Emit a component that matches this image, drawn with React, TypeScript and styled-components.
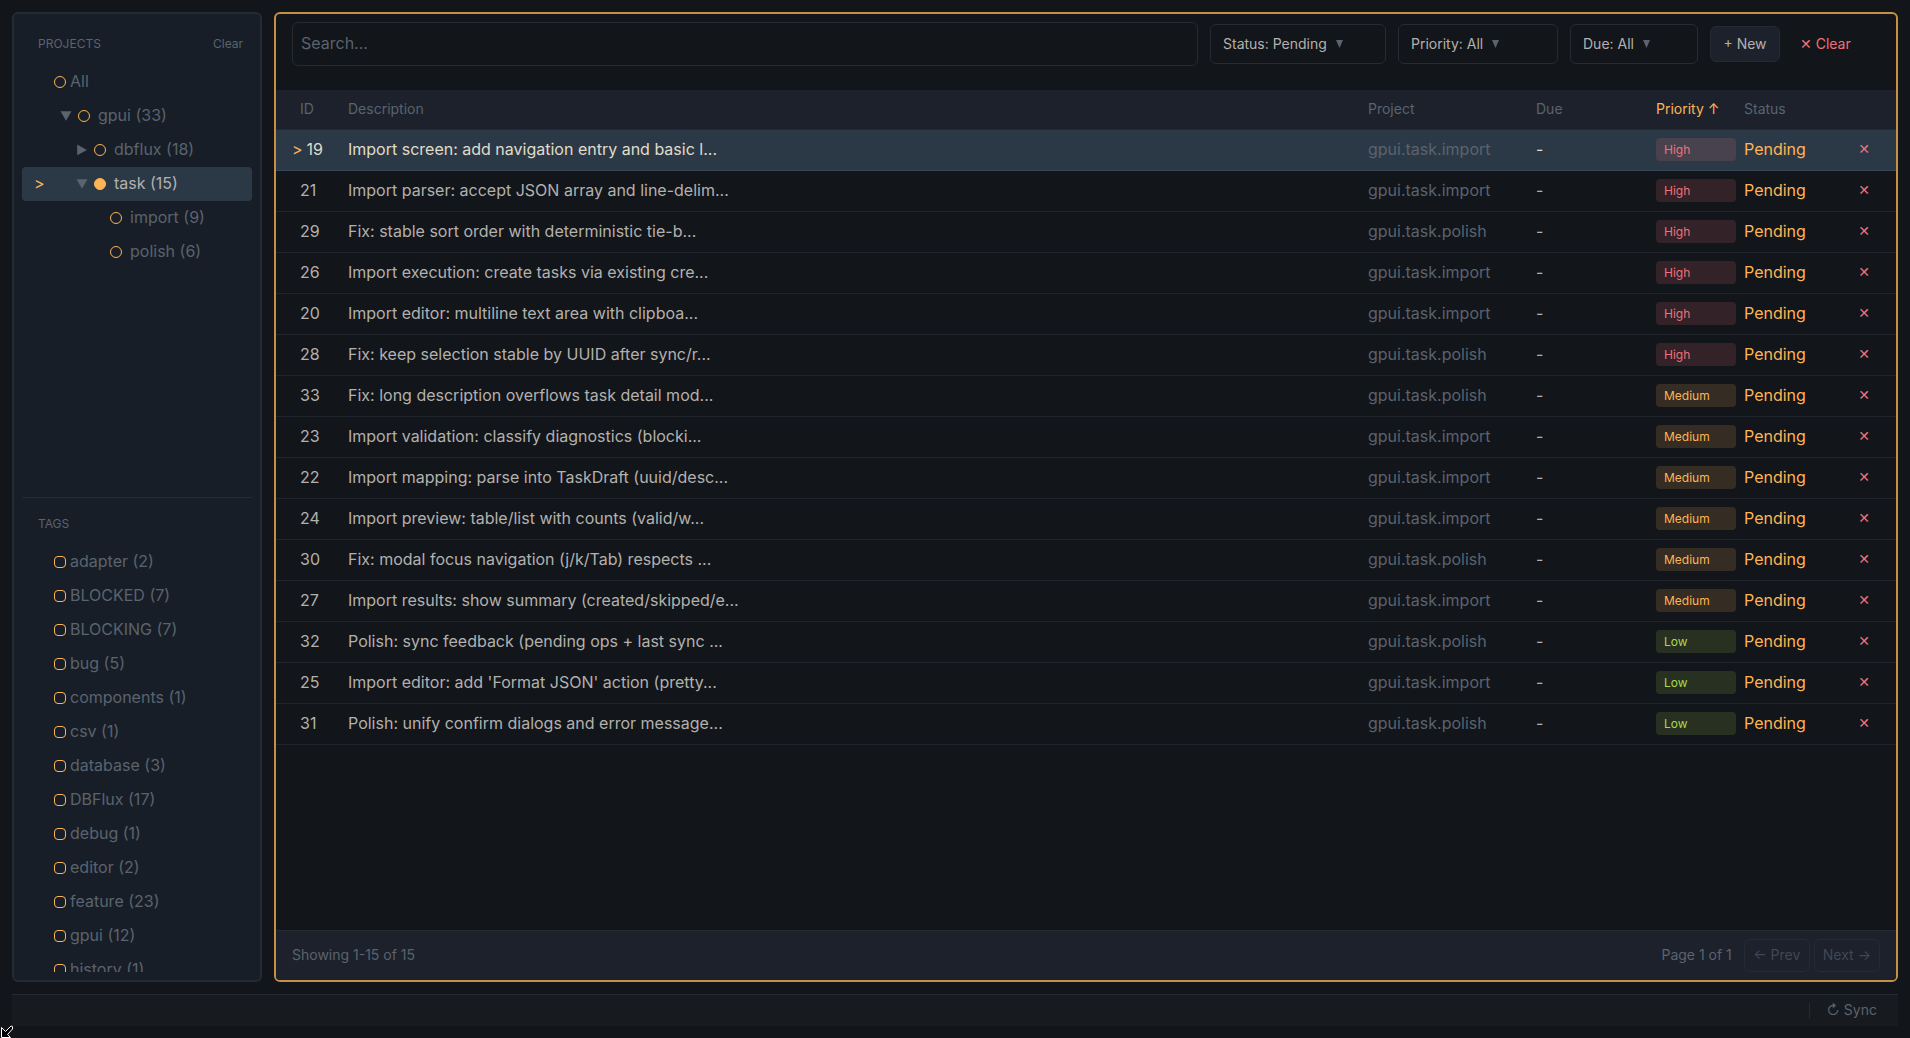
import React, { useState } from "react";
import styled, { createGlobalStyle } from "styled-components";

const c = {
  bg: "#12151a",
  panel: "#181e27",
  header: "#1c212c",
  bar: "#171b1f",
  border: "#252a33",
  line: "#20252b",
  select: "#2b3947",
  muted: "#5a636e",
  text: "#b3b1ad",
  bright: "#e0dcca",
  accent: "#ffb454",
  focus: "#c68f46",
  red: "#f07178",
  green: "#aad94c",
};

const Global = createGlobalStyle`
  *, *::before, *::after { box-sizing: border-box; }
  body {
    margin: 0;
    background: ${c.bg};
    color: ${c.text};
    font: 16px/26px Inter, "Noto Sans", "DejaVu Sans", sans-serif;
  }
  button, input, select { font: inherit; color: inherit; }
`;

const Shell = styled.div`
  height: 100vh;
  padding: 12px;
  display: flex;
  flex-direction: column;
  gap: 12px;
  overflow: hidden;
`;

const Body = styled.div`
  flex: 1;
  min-height: 0;
  display: flex;
  gap: 12px;
`;

const Sidebar = styled.aside`
  width: 250px;
  flex: none;
  display: grid;
  grid-template-rows: minmax(0, 1fr) minmax(0, 1fr);
  padding: 8px;
  background: ${c.panel};
  border: 2px solid ${c.border};
  border-radius: 6px;
`;

const Section = styled.section<{ $divided?: boolean }>`
  min-height: 0;
  overflow: hidden;
  ${(p) => p.$divided && `border-top: 1px solid ${c.border}; padding-top: 4px;`}
`;

const SectionHead = styled.header`
  display: flex;
  justify-content: space-between;
  padding: 12px 9px 12px 16px;
  font-size: 12px;
  line-height: 19px;
  color: ${c.muted};
`;

const SectionTitle = styled.h2`
  margin: 0;
  font: inherit;
`;

const TextButton = styled.button`
  padding: 0;
  border: 0;
  background: none;
  line-height: inherit;
`;

const List = styled.ul`
  margin: 0;
  padding: 0;
  list-style: none;
`;

const Item = styled.li<{ $active?: boolean }>`
  display: flex;
  align-items: center;
  height: 34px;
  padding-left: 12px;
  border-radius: 4px;
  color: ${(p) => (p.$active ? c.text : c.muted)};
  background: ${(p) => (p.$active ? c.select : "none")};
`;

const Gutter = styled.span`
  width: 20px;
  padding-bottom: 2px;
  color: ${c.accent};
`;

const Twisty = styled.button<{ $depth: number }>`
  display: flex;
  align-items: center;
  justify-content: center;
  width: 16px;
  height: 26px;
  padding: 0;
  border: 0;
  background: none;
  margin-left: ${(p) => 4 + p.$depth * 16}px;
  margin-right: 4px;
  color: ${c.muted};
`;

const Choice = styled.label<{ $gap: number }>`
  display: flex;
  align-items: center;
  gap: ${(p) => p.$gap}px;
`;

const Name = styled.span`
  padding-bottom: 2px;
`;

const Mark = styled.input<{ $round?: boolean }>`
  appearance: none;
  width: 12px;
  height: 12px;
  margin: 0;
  border: 1px solid ${c.accent};
  border-radius: ${(p) => (p.$round ? "50%" : "4px")};
  &:checked { background: ${c.accent}; }
`;

const Main = styled.main`
  flex: 1;
  min-width: 0;
  display: flex;
  flex-direction: column;
  overflow: hidden;
  border: 2px solid ${c.focus};
  border-radius: 6px;
`;

const Toolbar = styled.div`
  display: flex;
  align-items: center;
  gap: 12px;
  padding: 8px 16px 24px;
  font-size: 14px;
`;

const Search = styled.input`
  flex: 1;
  min-width: 0;
  height: 44px;
  padding: 0 8px 2px;
  font-size: 16px;
  background: none;
  border: 1px solid ${c.border};
  border-radius: 6px;
  outline: 0;
  &::placeholder { color: ${c.muted}; opacity: 1; }
`;

const Filter = styled.label<{ $width: number }>`
  display: flex;
  align-items: center;
  gap: 9px;
  width: ${(p) => p.$width}px;
  height: 40px;
  padding: 0 12px;
  border: 1px solid ${c.border};
  border-radius: 6px;
`;

const FilterSelect = styled.select`
  appearance: none;
  field-sizing: content;
  padding: 0;
  border: 0;
  background: none;
  outline: 0;
`;

const Caret = styled.svg`
  flex: none;
  fill: ${c.muted};
`;

const NewButton = styled.button`
  min-width: 70px;
  height: 36px;
  padding: 0 12px;
  background: ${c.header};
  border: 1px solid ${c.border};
  border-radius: 6px;
`;

const ClearButton = styled.button`
  width: 88px;
  height: 36px;
  padding: 0 8px;
  text-align: left;
  background: none;
  border: 0;
  color: ${c.red};
`;

const TableArea = styled.div`
  flex: 1;
  min-height: 0;
  overflow: hidden;
`;

const Table = styled.table`
  width: 100%;
  table-layout: fixed;
  border-collapse: separate;
  border-spacing: 0;
`;

const Th = styled.th<{ $width?: number; $sorted?: boolean; $indent?: number }>`
  width: ${(p) => (p.$width ? `${p.$width}px` : "auto")};
  height: 40px;
  padding: 0 0 2px ${(p) => p.$indent ?? 0}px;
  text-align: left;
  font-size: 14px;
  font-weight: 400;
  line-height: 23px;
  white-space: nowrap;
  color: ${(p) => (p.$sorted ? c.accent : c.muted)};
  background: ${c.header};
  border-bottom: 1px solid ${c.border};
`;

const Row = styled.tr<{ $active: boolean }>`
  background: ${(p) => (p.$active ? c.select : "none")};
  color: ${(p) => (p.$active ? c.bright : c.text)};
  & > td { border-bottom: 1px solid ${(p) => (p.$active ? "#36475a" : c.line)}; }
`;

const Td = styled.td<{ $color?: string; $indent?: number }>`
  height: 41px;
  padding: 0 8px 2px ${(p) => p.$indent ?? 0}px;
  white-space: nowrap;
  color: ${(p) => p.$color ?? "inherit"};
`;

const BadgeCell = styled.td`
  height: 41px;
  padding: 0 8px 1px 0;
`;

const Pointer = styled.span`
  margin-right: 4px;
  color: ${c.accent};
`;

const tones = {
  High: { color: c.red, bg: "rgba(240,113,120,.15)" },
  Medium: { color: c.accent, bg: "rgba(255,180,84,.15)" },
  Low: { color: c.green, bg: "rgba(170,217,76,.15)" },
};
type Level = keyof typeof tones;

const Badge = styled.span<{ $level: Level }>`
  display: block;
  padding: 2px 8px;
  font-size: 12px;
  line-height: 19px;
  border-radius: 4px;
  color: ${(p) => tones[p.$level].color};
  background: ${(p) => tones[p.$level].bg};
`;

const Remove = styled.button`
  display: block;
  width: 32px;
  padding: 0;
  border: 0;
  background: none;
  text-align: center;
  font-size: 14px;
  color: ${c.red};
`;

const Footer = styled.footer`
  display: flex;
  align-items: center;
  gap: 4px;
  height: 50px;
  padding: 0 16px;
  font-size: 14px;
  color: ${c.muted};
  background: ${c.header};
  border-top: 1px solid ${c.border};
`;

const Count = styled.span`
  flex: 1;
  padding-bottom: 2px;
`;

const PageInfo = styled.span`
  margin-right: 8px;
  padding-bottom: 2px;
`;

const PageButton = styled.button`
  min-width: 66px;
  height: 33px;
  padding: 0 8px 2px;
  background: none;
  border: 1px solid ${c.muted};
  border-radius: 6px;
  &:disabled { color: #424853; border-color: ${c.border}; }
`;

const StatusBar = styled.div`
  display: flex;
  justify-content: flex-end;
  align-items: center;
  height: 32px;
  padding: 0 21px;
  background: ${c.bar};
  border-top: 1px solid ${c.border};
`;

const SyncButton = styled.button`
  height: 16px;
  padding: 0 0 2px 17px;
  border: 0;
  border-left: 1px solid ${c.border};
  background: none;
  font-size: 14px;
  line-height: 14px;
  color: ${c.muted};
`;

const Cursor = styled.svg`
  position: absolute;
  left: 0;
  bottom: 0;
`;

const projects = [
  { name: "gpui (33)", depth: 0, open: true },
  { name: "dbflux (18)", depth: 1, open: false },
  { name: "task (15)", depth: 1, open: true },
  { name: "import (9)", depth: 2 },
  { name: "polish (6)", depth: 2 },
];

const tags = [
  "adapter (2)", "BLOCKED (7)", "BLOCKING (7)", "bug (5)", "components (1)",
  "csv (1)", "database (3)", "DBFlux (17)", "debug (1)", "editor (2)",
  "feature (23)", "gpui (12)", "history (1)",
];

const tasks: [number, string, string, Level][] = [
  [19, "Import screen: add navigation entry and basic l...", "import", "High"],
  [21, "Import parser: accept JSON array and line-delim...", "import", "High"],
  [29, "Fix: stable sort order with deterministic tie-b...", "polish", "High"],
  [26, "Import execution: create tasks via existing cre...", "import", "High"],
  [20, "Import editor: multiline text area with clipboa...", "import", "High"],
  [28, "Fix: keep selection stable by UUID after sync/r...", "polish", "High"],
  [33, "Fix: long description overflows task detail mod...", "polish", "Medium"],
  [23, "Import validation: classify diagnostics (blocki...", "import", "Medium"],
  [22, "Import mapping: parse into TaskDraft (uuid/desc...", "import", "Medium"],
  [24, "Import preview: table/list with counts (valid/w...", "import", "Medium"],
  [30, "Fix: modal focus navigation (j/k/Tab) respects ...", "polish", "Medium"],
  [27, "Import results: show summary (created/skipped/e...", "import", "Medium"],
  [32, "Polish: sync feedback (pending ops + last sync ...", "polish", "Low"],
  [25, "Import editor: add 'Format JSON' action (pretty...", "import", "Low"],
  [31, "Polish: unify confirm dialogs and error message...", "polish", "Low"],
];

const filters = [
  { name: "Status", value: "Pending", width: 176 },
  { name: "Priority", value: "All", width: 160 },
  { name: "Due", value: "All", width: 128 },
];

const Arrow = ({ open }: { open: boolean }) =>
  open ? (
    <svg width="12" height="10" viewBox="0 0 12 10" fill="currentColor" aria-hidden="true">
      <path d="M.5 .3H11.500L6 9.700Z" />
    </svg>
  ) : (
    <svg width="10" height="12" viewBox="0 0 10 12" fill="currentColor" aria-hidden="true">
      <path d="M.2 .5V11.300L9.900 5.900Z" />
    </svg>
  );

export default function App() {
  const [project, setProject] = useState("task (15)");
  const [current, setCurrent] = useState(19);

  return (
    <Shell>
      <Global />
      <Body>
        <Sidebar>
          <Section>
            <SectionHead>
              <SectionTitle>PROJECTS</SectionTitle>
              <TextButton onClick={() => setProject("All")}>Clear</TextButton>
            </SectionHead>
            <List>
              <Item $active={project === "All"}>
                <Gutter>{project === "All" && ">"}</Gutter>
                <Choice $gap={4}>
                  <Mark $round type="radio" name="project" checked={project === "All"} onChange={() => setProject("All")} />
                  <Name>All</Name>
                </Choice>
              </Item>
              {projects.map((p) => (
                <Item key={p.name} $active={project === p.name}>
                  <Gutter>{project === p.name && ">"}</Gutter>
                  {p.open === undefined ? (
                    <Twisty as="span" $depth={p.depth} />
                  ) : (
                    <Twisty $depth={p.depth} aria-label={`Toggle ${p.name}`} aria-expanded={p.open}>
                      <Arrow open={p.open} />
                    </Twisty>
                  )}
                  <Choice $gap={8}>
                    <Mark $round type="radio" name="project" checked={project === p.name} onChange={() => setProject(p.name)} />
                    <Name>{p.name}</Name>
                  </Choice>
                </Item>
              ))}
            </List>
          </Section>
          <Section $divided>
            <SectionHead>
              <SectionTitle>TAGS</SectionTitle>
            </SectionHead>
            <List>
              {tags.map((t) => (
                <Item key={t}>
                  <Gutter />
                  <Choice $gap={4}>
                    <Mark type="checkbox" />
                    <Name>{t}</Name>
                  </Choice>
                </Item>
              ))}
            </List>
          </Section>
        </Sidebar>

        <Main>
          <Toolbar>
            <Search type="text" placeholder="Search..." aria-label="Search" />
            {filters.map((f) => (
              <Filter key={f.name} $width={f.width}>
                <FilterSelect aria-label={f.name}>
                  <option>{`${f.name}: ${f.value}`}</option>
                </FilterSelect>
                <Caret width="7" height="8" viewBox="0 0 7 8" aria-hidden="true">
                  <path d="M0 0H7L3.500 8Z" />
                </Caret>
              </Filter>
            ))}
            <NewButton>+ New</NewButton>
            <ClearButton>✕ Clear</ClearButton>
          </Toolbar>

          <TableArea>
            <Table>
              <thead>
                <tr>
                  <Th $width={72} $indent={24}>ID</Th>
                  <Th>Description</Th>
                  <Th $width={168}>Project</Th>
                  <Th $width={120}>Due</Th>
                  <Th $width={88} $sorted>Priority ↑</Th>
                  <Th $width={104}>Status</Th>
                  <Th $width={48} />
                </tr>
              </thead>
              <tbody>
                {tasks.map(([id, title, leaf, level]) => (
                  <Row key={id} $active={id === current} onClick={() => setCurrent(id)}>
                    <Td $indent={id === current ? 16 : 24}>
                      {id === current && <Pointer>&gt;</Pointer>}
                      {id}
                    </Td>
                    <Td>{title}</Td>
                    <Td $color={c.muted}>gpui.task.{leaf}</Td>
                    <Td>-</Td>
                    <BadgeCell><Badge $level={level}>{level}</Badge></BadgeCell>
                    <Td $color={c.accent}>Pending</Td>
                    <Td><Remove aria-label={`Delete task ${id}`}>✕</Remove></Td>
                  </Row>
                ))}
              </tbody>
            </Table>
          </TableArea>

          <Footer>
            <Count>Showing 1-15 of 15</Count>
            <PageInfo>Page 1 of 1</PageInfo>
            <PageButton disabled>← Prev</PageButton>
            <PageButton disabled>Next →</PageButton>
          </Footer>
        </Main>
      </Body>
      <StatusBar>
        <SyncButton>↻ Sync</SyncButton>
      </StatusBar>
      <Cursor width="14" height="13" viewBox="0 0 14 13" aria-hidden="true">
        <path d="M1.5 2.5V12.5H10.5L7.5 9.5L12.5 4V1.500L11 1L5.500 6.500Z" fill="#000" stroke="#fff" />
      </Cursor>
    </Shell>
  );
}
